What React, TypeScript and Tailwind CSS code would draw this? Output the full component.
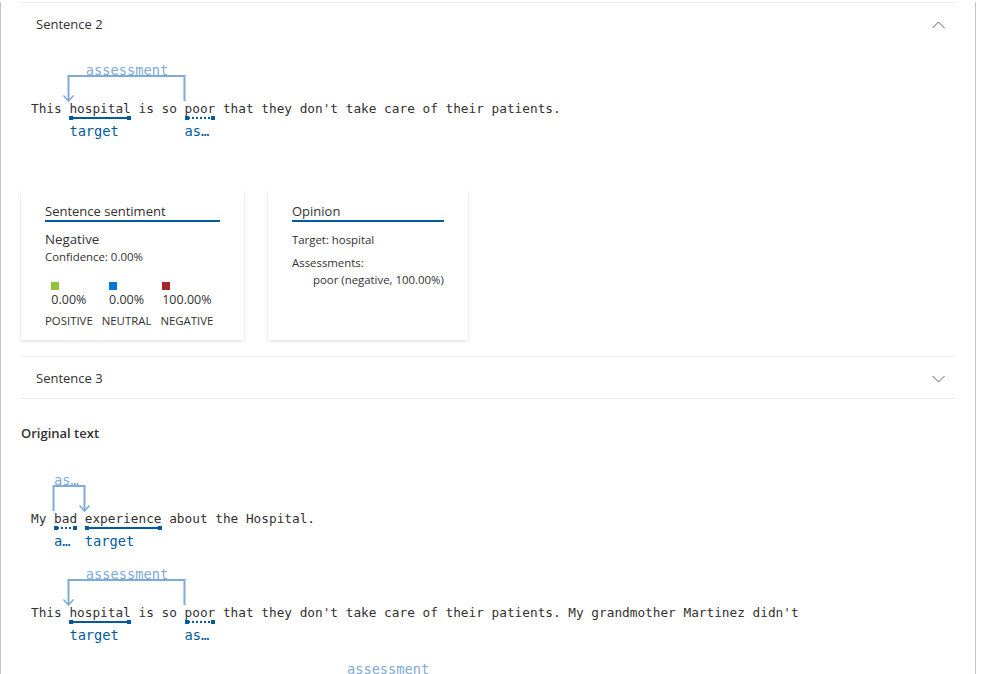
import React from "react";

const CW = 7.68;
const PADX = 10;
const MONO = '"DejaVu Sans Mono", monospace';
const SANS = '"Segoe UI", "Open Sans", sans-serif';
const ARC = "#7fabd6";
const BLUE = "#005a9e";

type Span = { start: number; len: number; label: string; kind: "target" | "assessment" };
type ArcT = { from: number; to: number; label: string };

const xs = (c: number) => PADX + c * CW;

function AnnotatedLine({
  text,
  spans,
  arcs,
  className,
}: {
  text: string;
  spans: Span[];
  arcs: ArcT[];
  className?: string;
}) {
  return (
    <div className={"relative h-[82px] " + (className ?? "")}>
      <svg className="absolute left-0 top-0 overflow-visible" width="935" height="82">
        {arcs.map((a, i) => {
          const xa = Math.round(xs(a.from)) - 0.5;
          const xt = Math.round(xs(a.to)) - 0.5;
          return (
            <g key={i} stroke={ARC} strokeWidth="2" fill="none">
              <polyline points={`${xa},41 ${xa},16 ${xt},16 ${xt},41`} />
              <polyline points={`${xt - 5},35.5 ${xt},41 ${xt + 5},35.5`} strokeWidth="1.6" />
            </g>
          );
        })}
        {spans.map((s, i) => {
          const x1 = Math.round(xs(s.start));
          const x2 = Math.round(xs(s.start + s.len));
          return (
            <g key={i} fill={BLUE}>
              {s.kind === "target" ? (
                <line x1={x1} x2={x2} y1="58" y2="58" stroke={BLUE} strokeWidth="2" />
              ) : (
                <line x1={x1 + 3} x2={x2 - 2} y1="58" y2="58" stroke={BLUE} strokeWidth="2" strokeDasharray="2 2" />
              )}
              <rect x={x1} y="56" width="4" height="4" />
              <rect x={x2 - 4} y="56" width="4" height="4" />
            </g>
          );
        })}
      </svg>
      {arcs.map((a, i) => {
        const l = Math.min(xs(a.from), xs(a.to));
        const w = Math.abs(xs(a.to) - xs(a.from));
        return (
          <div
            key={i}
            className="absolute top-[2px] h-[16px] overflow-hidden text-ellipsis whitespace-nowrap text-center text-[13.7px] leading-[16px]"
            style={{ left: l, width: w, color: ARC, fontFamily: MONO }}
          >
            {a.label}
          </div>
        );
      })}
      <div
        className="absolute left-[10px] top-[41px] whitespace-pre text-[12.75px] leading-[16px] text-[#323130]"
        style={{ fontFamily: MONO }}
      >
        {text}
      </div>
      {spans.map((s, i) => (
        <div
          key={i}
          className="absolute top-[63px] h-[16px] overflow-hidden text-ellipsis whitespace-nowrap text-[13.7px] leading-[16px] text-[#005a9e]"
          style={{ left: xs(s.start), width: s.len * CW + 0.5, fontFamily: MONO }}
        >
          {s.label}
        </div>
      ))}
    </div>
  );
}

function Chevron({ up }: { up?: boolean }) {
  return (
    <svg width="13" height="8" viewBox="0 0 13 8" fill="none" stroke="#605e5c" strokeWidth="1">
      {up ? <polyline points="0.5,7 6.5,1 12.5,7" /> : <polyline points="0.5,1 6.5,7 12.5,1" />}
    </svg>
  );
}

const sentence2 = "This hospital is so poor that they don't take care of their patients.";

const cardShadow =
  "shadow-[0_1.6px_3.6px_0_rgba(0,0,0,0.132),0_0.3px_0.9px_0_rgba(0,0,0,0.108)]";

export default function App() {
  return (
    <div className="relative h-[674px] w-[982px] overflow-hidden bg-white" style={{ fontFamily: SANS }}>
      <div className="h-full w-[976px] border-l border-r border-[#c8c6c4] pl-[20px] pr-[20px] text-[#323130]">
        {/* Sentence 2 */}
        <div className="mt-[2px] border-t border-[#edebe9]">
          <div className="flex h-[43px] items-center justify-between pl-[15px] pr-[10px] pt-[1px]">
            <span className="text-[13px]">Sentence 2</span>
            <Chevron up />
          </div>
          <AnnotatedLine
            className="mt-[14px]"
            text={sentence2}
            spans={[
              { start: 5, len: 8, label: "target", kind: "target" },
              { start: 20, len: 4, label: "assessment", kind: "assessment" },
            ]}
            arcs={[{ from: 20, to: 5, label: "assessment" }]}
          />
          <div className="mt-[48px] flex items-start gap-[24px]">
            <div className={"h-[150px] w-[223px] bg-white px-[24px] pt-[13px] " + cardShadow}>
              <div className="border-b-2 border-[#005a9e] text-[13px] font-medium leading-[17px]">
                Sentence sentiment
              </div>
              <div className="mt-[8px] text-[13.3px] leading-[18px]">Negative</div>
              <div className="mt-[2px] text-[11.4px] leading-[14px]">Confidence: 0.00%</div>
              <div className="mt-[18px] flex gap-[9px]">
                {[
                  { c: "bg-[#92c13b]", p: "0.00%", l: "POSITIVE" },
                  { c: "bg-[#0078d4]", p: "0.00%", l: "NEUTRAL" },
                  { c: "bg-[#a4262c]", p: "100.00%", l: "NEGATIVE" },
                ].map((s) => (
                  <div key={s.l} className="flex flex-col items-center">
                    <div className="flex flex-col items-start">
                      <div className={"h-[8px] w-[8px] " + s.c} />
                      <div className="mt-[2px] text-[12.5px] leading-[16px]">{s.p}</div>
                    </div>
                    <div className="mt-[6px] text-[11.4px] leading-[14px]">{s.l}</div>
                  </div>
                ))}
              </div>
            </div>
            <div className={"h-[150px] w-[200px] bg-white px-[24px] pt-[13px] " + cardShadow}>
              <div className="border-b-2 border-[#005a9e] text-[13px] font-medium leading-[17px]">
                Opinion
              </div>
              <div className="mt-[11px] text-[11.4px] leading-[14px]">Target: hospital</div>
              <div className="mt-[9px] text-[11.4px] leading-[14px]">Assessments:</div>
              <div className="mt-[3px] pl-[21px] text-[11.4px] leading-[14px]">poor (negative, 100.00%)</div>
            </div>
          </div>
        </div>

        {/* Sentence 3 */}
        <div className="mt-[16px] flex h-[43px] items-center justify-between border-y border-[#edebe9] pl-[15px] pr-[10px] pt-[2px]">
          <span className="text-[13px]">Sentence 3</span>
          <Chevron />
        </div>

        <div className="mt-[24px] text-[13px] font-semibold leading-[20px]">Original text</div>
        <AnnotatedLine
          className="mt-[27px]"
          text="My bad experience about the Hospital."
          spans={[
            { start: 3, len: 3, label: "assessment", kind: "assessment" },
            { start: 7, len: 10, label: "target", kind: "target" },
          ]}
          arcs={[{ from: 3, to: 7, label: "assessment" }]}
        />
        <AnnotatedLine
          className="mt-[12px]"
          text={sentence2 + " My grandmother Martinez didn't"}
          spans={[
            { start: 5, len: 8, label: "target", kind: "target" },
            { start: 20, len: 4, label: "assessment", kind: "assessment" },
          ]}
          arcs={[{ from: 20, to: 5, label: "assessment" }]}
        />
        <AnnotatedLine
          className="mt-[13px]"
          text="receive the attention she needed and the staff was rude to us."
          spans={[]}
          arcs={[{ from: 35, to: 58, label: "assessment" }]}
        />
      </div>
    </div>
  );
}
